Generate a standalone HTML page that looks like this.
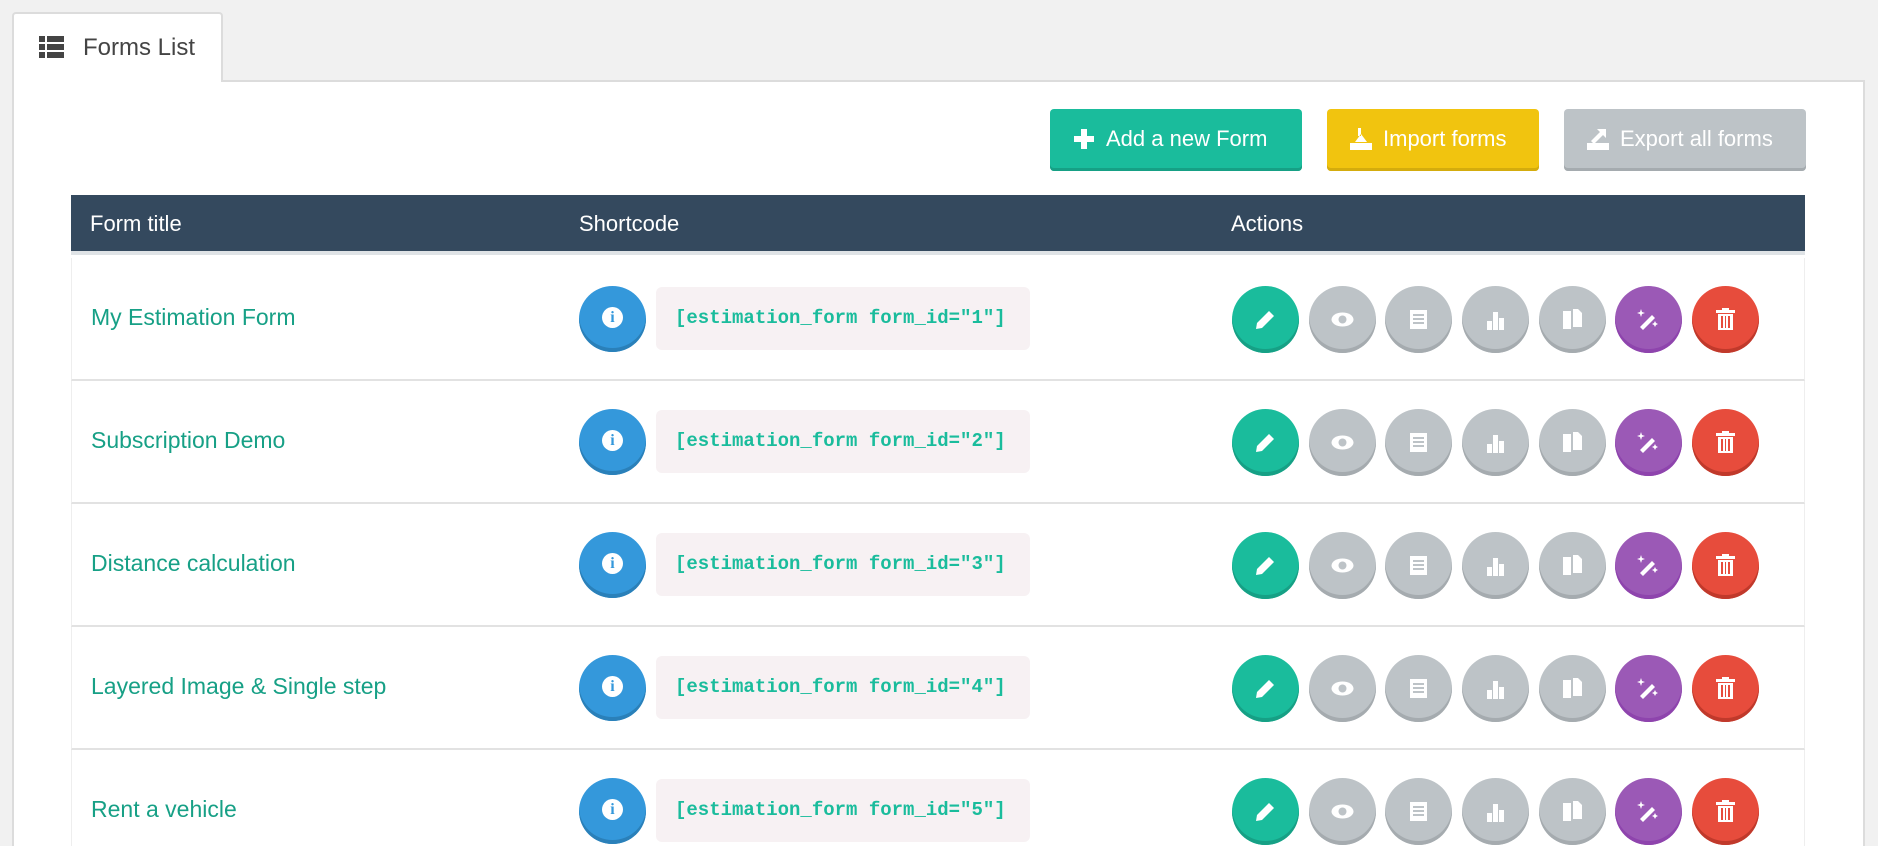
<!DOCTYPE html>
<html><head><meta charset="utf-8"><style>
*{margin:0;padding:0;box-sizing:border-box}
html,body{width:1878px;height:846px;overflow:hidden}
body{background:#f1f1f1;font-family:"Liberation Sans",sans-serif}
#w{position:relative;width:1878px;height:846px;overflow:hidden}
.tab{position:absolute;left:12px;top:12px;width:211px;height:70px;background:#fff;border:2px solid #dcdcdc;border-bottom:none;border-radius:4px 4px 0 0;z-index:2}
.tab span{position:absolute;left:69px;top:20px;font-size:24px;color:#444}
.panel{position:absolute;left:12px;top:80px;width:1853px;height:780px;background:#fff;border:2px solid #dcdcdc;border-bottom:none}
.btn{position:absolute;top:109px;height:62px;border-radius:4px;color:#fff;font-size:22px;line-height:60px;padding-left:56px}
.hdr{position:absolute;left:71px;top:195px;width:1734px;height:60px;background:#34495e;border-bottom:4px solid #dfe3e6}
.hdr span{position:absolute;top:16px;color:#fff;font-size:22px}
.row{position:absolute;left:71px;width:1734px;height:123px;border-bottom:2px solid #e2e2e2;border-left:1px solid #eee;border-right:1px solid #eee}
.row .t{position:absolute;left:19px;top:46px;font-size:23px;color:#17a086}
.info{position:absolute;left:507px;top:28px;width:67px;height:66px;border-radius:50%;background:#3498db;box-shadow:inset 0 -4px 0 #2a80b9}
.info:after{content:"i";position:absolute;left:23px;top:21px;width:21px;height:21px;border-radius:50%;background:#fff;color:#3498db;font:bold 16px "Liberation Serif",serif;text-align:center;line-height:21px}
.code{position:absolute;left:584px;top:29px;width:374px;height:63px;border-radius:6px;background:#f7f1f3;color:#1abc9c;font:bold 19px "Liberation Mono",monospace;line-height:63px;padding-left:19px}
.a{position:absolute;top:28px;width:67px;height:67px;border-radius:50%}
.a svg{position:absolute;left:21px;top:21px}
.g{background:#1abc9c;box-shadow:inset 0 -4px 0 #16a085}
.s{background:#bdc3c7;box-shadow:inset 0 -4px 0 #a5abaf}
.p{background:#9b59b6;box-shadow:inset 0 -4px 0 #8e44ad}
.r{background:#e74c3c;box-shadow:inset 0 -4px 0 #c0392b}
</style></head><body><div id="w">
<div class="tab"><svg style="position:absolute;left:25px;top:22px" width="25" height="23" viewBox="0 0 25 23" fill="#444"><rect x="0" y="0" width="6" height="6"/><rect x="8" y="0" width="17" height="6"/><rect x="0" y="8" width="6" height="6"/><rect x="8" y="8" width="17" height="6"/><rect x="0" y="16" width="6" height="6"/><rect x="8" y="16" width="17" height="6"/></svg><span>Forms List</span></div>
<div class="panel"></div>
<div class="btn" style="left:1050px;width:252px;background:#1abc9c;box-shadow:inset 0 -3px 0 #16a085"><svg style="position:absolute;left:24px;top:20px" width="20" height="20" viewBox="0 0 20 20" fill="#fff"><rect x="7" y="0" width="6" height="20"/><rect x="0" y="7" width="20" height="6"/></svg>Add a new Form</div>
<div class="btn" style="left:1327px;width:212px;background:#f1c40f;box-shadow:inset 0 -3px 0 #d4ac0d"><svg style="position:absolute;left:23px;top:17px" width="22" height="24" viewBox="0 0 22 24" fill="#fff"><rect x="0" y="17" width="22" height="7"/><path d="M5 16h12l-6-8z M8 2l3 0 0 8 -3 0z"/></svg>Import forms</div>
<div class="btn" style="left:1564px;width:242px;background:#bdc3c7;box-shadow:inset 0 -3px 0 #a5abaf"><svg style="position:absolute;left:23px;top:17px" width="22" height="24" viewBox="0 0 22 24" fill="#fff"><rect x="0" y="17" width="22" height="7"/><path d="M4 15l9-9-3-3h9v9l-3-3-9 9z"/></svg>Export all forms</div>
<div class="hdr"><span style="left:19px">Form title</span><span style="left:508px">Shortcode</span><span style="left:1160px">Actions</span></div>

<div class="row" style="top:258px"><span class="t">My Estimation Form</span><div class="info"></div><div class="code">[estimation_form form_id="1"]</div>
<div class="a g" style="left:1160px"><svg width="25" height="25" viewBox="0 0 25 25" fill="#fff"><path d="M3 22l1-6 12-12 5 5-12 12z"/></svg></div>
<div class="a s" style="left:1237px"><svg width="25" height="25" viewBox="0 0 25 25"><ellipse cx="12.5" cy="12.5" rx="11" ry="7" fill="#fff"/><circle cx="12.5" cy="12.5" r="4" fill="#bdc3c7"/></svg></div>
<div class="a s" style="left:1313px"><svg width="25" height="25" viewBox="0 0 25 25" fill="#fff"><path d="M4 3h17v19H4z M7 7v2h11V7z M7 11v2h11v-2z M7 15v2h11v-2z" fill-rule="evenodd"/></svg></div>
<div class="a s" style="left:1390px"><svg width="25" height="25" viewBox="0 0 25 25" fill="#fff"><rect x="4" y="14" width="5" height="9"/><rect x="10" y="5" width="5" height="18"/><rect x="16" y="11" width="5" height="12"/></svg></div>
<div class="a s" style="left:1467px"><svg width="25" height="25" viewBox="0 0 25 25" fill="#fff"><path d="M3 4h8v18H3z M13 2h5l4 4v14h-9z"/></svg></div>
<div class="a p" style="left:1543px"><svg width="25" height="25" viewBox="0 0 25 25" fill="#fff"><path d="M4 20l12-12 3 3-12 12z M5 2l1 3 3 1-3 1-1 3-1-3-3-1 3-1z M19 14l1 2 2 1-2 1-1 2-1-2-2-1 2-1z"/></svg></div>
<div class="a r" style="left:1620px"><svg width="25" height="25" viewBox="0 0 25 25" fill="#fff"><path d="M9 1h7v2h6v3H3V3h6z M5 7h15v16H5z M8 9v12h2V9z M12 9v12h1V9z M15 9v12h2V9z" fill-rule="evenodd"/></svg></div>
</div>

<div class="row" style="top:381px"><span class="t">Subscription Demo</span><div class="info"></div><div class="code">[estimation_form form_id="2"]</div>
<div class="a g" style="left:1160px"><svg width="25" height="25" viewBox="0 0 25 25" fill="#fff"><path d="M3 22l1-6 12-12 5 5-12 12z"/></svg></div>
<div class="a s" style="left:1237px"><svg width="25" height="25" viewBox="0 0 25 25"><ellipse cx="12.5" cy="12.5" rx="11" ry="7" fill="#fff"/><circle cx="12.5" cy="12.5" r="4" fill="#bdc3c7"/></svg></div>
<div class="a s" style="left:1313px"><svg width="25" height="25" viewBox="0 0 25 25" fill="#fff"><path d="M4 3h17v19H4z M7 7v2h11V7z M7 11v2h11v-2z M7 15v2h11v-2z" fill-rule="evenodd"/></svg></div>
<div class="a s" style="left:1390px"><svg width="25" height="25" viewBox="0 0 25 25" fill="#fff"><rect x="4" y="14" width="5" height="9"/><rect x="10" y="5" width="5" height="18"/><rect x="16" y="11" width="5" height="12"/></svg></div>
<div class="a s" style="left:1467px"><svg width="25" height="25" viewBox="0 0 25 25" fill="#fff"><path d="M3 4h8v18H3z M13 2h5l4 4v14h-9z"/></svg></div>
<div class="a p" style="left:1543px"><svg width="25" height="25" viewBox="0 0 25 25" fill="#fff"><path d="M4 20l12-12 3 3-12 12z M5 2l1 3 3 1-3 1-1 3-1-3-3-1 3-1z M19 14l1 2 2 1-2 1-1 2-1-2-2-1 2-1z"/></svg></div>
<div class="a r" style="left:1620px"><svg width="25" height="25" viewBox="0 0 25 25" fill="#fff"><path d="M9 1h7v2h6v3H3V3h6z M5 7h15v16H5z M8 9v12h2V9z M12 9v12h1V9z M15 9v12h2V9z" fill-rule="evenodd"/></svg></div>
</div>

<div class="row" style="top:504px"><span class="t">Distance calculation</span><div class="info"></div><div class="code">[estimation_form form_id="3"]</div>
<div class="a g" style="left:1160px"><svg width="25" height="25" viewBox="0 0 25 25" fill="#fff"><path d="M3 22l1-6 12-12 5 5-12 12z"/></svg></div>
<div class="a s" style="left:1237px"><svg width="25" height="25" viewBox="0 0 25 25"><ellipse cx="12.5" cy="12.5" rx="11" ry="7" fill="#fff"/><circle cx="12.5" cy="12.5" r="4" fill="#bdc3c7"/></svg></div>
<div class="a s" style="left:1313px"><svg width="25" height="25" viewBox="0 0 25 25" fill="#fff"><path d="M4 3h17v19H4z M7 7v2h11V7z M7 11v2h11v-2z M7 15v2h11v-2z" fill-rule="evenodd"/></svg></div>
<div class="a s" style="left:1390px"><svg width="25" height="25" viewBox="0 0 25 25" fill="#fff"><rect x="4" y="14" width="5" height="9"/><rect x="10" y="5" width="5" height="18"/><rect x="16" y="11" width="5" height="12"/></svg></div>
<div class="a s" style="left:1467px"><svg width="25" height="25" viewBox="0 0 25 25" fill="#fff"><path d="M3 4h8v18H3z M13 2h5l4 4v14h-9z"/></svg></div>
<div class="a p" style="left:1543px"><svg width="25" height="25" viewBox="0 0 25 25" fill="#fff"><path d="M4 20l12-12 3 3-12 12z M5 2l1 3 3 1-3 1-1 3-1-3-3-1 3-1z M19 14l1 2 2 1-2 1-1 2-1-2-2-1 2-1z"/></svg></div>
<div class="a r" style="left:1620px"><svg width="25" height="25" viewBox="0 0 25 25" fill="#fff"><path d="M9 1h7v2h6v3H3V3h6z M5 7h15v16H5z M8 9v12h2V9z M12 9v12h1V9z M15 9v12h2V9z" fill-rule="evenodd"/></svg></div>
</div>

<div class="row" style="top:627px"><span class="t">Layered Image &amp; Single step</span><div class="info"></div><div class="code">[estimation_form form_id="4"]</div>
<div class="a g" style="left:1160px"><svg width="25" height="25" viewBox="0 0 25 25" fill="#fff"><path d="M3 22l1-6 12-12 5 5-12 12z"/></svg></div>
<div class="a s" style="left:1237px"><svg width="25" height="25" viewBox="0 0 25 25"><ellipse cx="12.5" cy="12.5" rx="11" ry="7" fill="#fff"/><circle cx="12.5" cy="12.5" r="4" fill="#bdc3c7"/></svg></div>
<div class="a s" style="left:1313px"><svg width="25" height="25" viewBox="0 0 25 25" fill="#fff"><path d="M4 3h17v19H4z M7 7v2h11V7z M7 11v2h11v-2z M7 15v2h11v-2z" fill-rule="evenodd"/></svg></div>
<div class="a s" style="left:1390px"><svg width="25" height="25" viewBox="0 0 25 25" fill="#fff"><rect x="4" y="14" width="5" height="9"/><rect x="10" y="5" width="5" height="18"/><rect x="16" y="11" width="5" height="12"/></svg></div>
<div class="a s" style="left:1467px"><svg width="25" height="25" viewBox="0 0 25 25" fill="#fff"><path d="M3 4h8v18H3z M13 2h5l4 4v14h-9z"/></svg></div>
<div class="a p" style="left:1543px"><svg width="25" height="25" viewBox="0 0 25 25" fill="#fff"><path d="M4 20l12-12 3 3-12 12z M5 2l1 3 3 1-3 1-1 3-1-3-3-1 3-1z M19 14l1 2 2 1-2 1-1 2-1-2-2-1 2-1z"/></svg></div>
<div class="a r" style="left:1620px"><svg width="25" height="25" viewBox="0 0 25 25" fill="#fff"><path d="M9 1h7v2h6v3H3V3h6z M5 7h15v16H5z M8 9v12h2V9z M12 9v12h1V9z M15 9v12h2V9z" fill-rule="evenodd"/></svg></div>
</div>

<div class="row" style="top:750px"><span class="t">Rent a vehicle</span><div class="info"></div><div class="code">[estimation_form form_id="5"]</div>
<div class="a g" style="left:1160px"><svg width="25" height="25" viewBox="0 0 25 25" fill="#fff"><path d="M3 22l1-6 12-12 5 5-12 12z"/></svg></div>
<div class="a s" style="left:1237px"><svg width="25" height="25" viewBox="0 0 25 25"><ellipse cx="12.5" cy="12.5" rx="11" ry="7" fill="#fff"/><circle cx="12.5" cy="12.5" r="4" fill="#bdc3c7"/></svg></div>
<div class="a s" style="left:1313px"><svg width="25" height="25" viewBox="0 0 25 25" fill="#fff"><path d="M4 3h17v19H4z M7 7v2h11V7z M7 11v2h11v-2z M7 15v2h11v-2z" fill-rule="evenodd"/></svg></div>
<div class="a s" style="left:1390px"><svg width="25" height="25" viewBox="0 0 25 25" fill="#fff"><rect x="4" y="14" width="5" height="9"/><rect x="10" y="5" width="5" height="18"/><rect x="16" y="11" width="5" height="12"/></svg></div>
<div class="a s" style="left:1467px"><svg width="25" height="25" viewBox="0 0 25 25" fill="#fff"><path d="M3 4h8v18H3z M13 2h5l4 4v14h-9z"/></svg></div>
<div class="a p" style="left:1543px"><svg width="25" height="25" viewBox="0 0 25 25" fill="#fff"><path d="M4 20l12-12 3 3-12 12z M5 2l1 3 3 1-3 1-1 3-1-3-3-1 3-1z M19 14l1 2 2 1-2 1-1 2-1-2-2-1 2-1z"/></svg></div>
<div class="a r" style="left:1620px"><svg width="25" height="25" viewBox="0 0 25 25" fill="#fff"><path d="M9 1h7v2h6v3H3V3h6z M5 7h15v16H5z M8 9v12h2V9z M12 9v12h1V9z M15 9v12h2V9z" fill-rule="evenodd"/></svg></div>
</div>
</div></body></html>
